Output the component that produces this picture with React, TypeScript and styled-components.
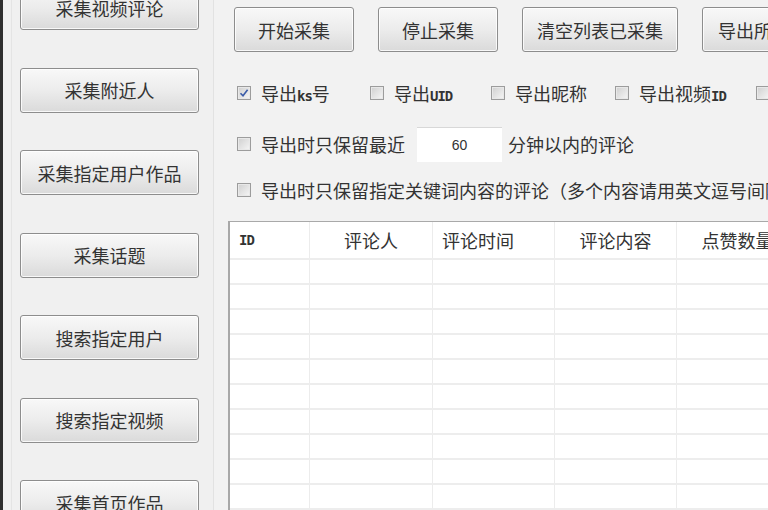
import styled, { createGlobalStyle } from "styled-components";

const GlobalStyle = createGlobalStyle`
    html, body {
        margin: 0;
        padding: 0;
        width: 768px;
        height: 510px;
        overflow: hidden;
        background: #f0f0f0;
    }
    body {
        font-family: "Noto Sans CJK SC", "DejaVu Sans", sans-serif;
        color: #333333;
    }
`;

const Window = styled.div`
    display: flex;
    flex-direction: row;
    width: 768px;
    height: 510px;
    overflow: hidden;
    background: #f0f0f0;
`;

const EdgeStrip = styled.div`
    width: 3px;
    flex: none;
    background: #2e2e2e;
`;

const Sidebar = styled.div`
    flex: none;
    width: 203px;
    box-sizing: border-box;
    display: flex;
    flex-direction: column;
    align-items: flex-start;
    gap: 37.5px;
    margin-top: -15px;
    margin-left: 8px;
    padding-left: 8px;
    border-left: 1px solid #e4e4e4;
    border-right: 1px solid #e2e2e2;
`;

const Button = styled.div<{ $w: number }>`
    flex: none;
    width: ${(p) => p.$w}px;
    height: 45px;
    box-sizing: border-box;
    display: flex;
    align-items: center;
    justify-content: center;
    border: 1px solid #8d8d8d;
    border-radius: 3px;
    background: linear-gradient(to bottom, #f8f8f8 0%, #ececec 50%, #dadada 100%);
    box-shadow: inset 0 0 0 1px rgba(255, 255, 255, 0.8);
    font-size: 18px;
    color: #333333;
    white-space: nowrap;
`;

const Main = styled.div`
    flex: 1;
    display: flex;
    flex-direction: column;
    padding-top: 7px;
    padding-left: 20px;
    min-width: 0;
    background: #f2f2f2;
`;

const Toolbar = styled.div`
    display: flex;
    flex-direction: row;
    gap: 24px;
`;

const OptionRow = styled.div<{ $top: number }>`
    display: flex;
    flex-direction: row;
    align-items: center;
    margin-top: ${(p) => p.$top}px;
    padding-left: 3px;
    height: 34px;
    white-space: nowrap;
`;

const Option = styled.div<{ $w?: number }>`
    flex: none;
    display: flex;
    align-items: center;
    gap: 10px;
    width: ${(p) => (p.$w ? `${p.$w}px` : "auto")};
    font-size: 18px;
`;

const Box = styled.div`
    width: 14px;
    height: 14px;
    flex: none;
    box-sizing: border-box;
    border: 1px solid #9c9c9c;
    background: linear-gradient(135deg, #cfcfcf, #f6f6f6);
    box-shadow: inset 0 0 0 1px #e8e8e8;
    display: flex;
    align-items: center;
    justify-content: center;
`;

const Latin = styled.span`
    font-family: "DejaVu Sans Mono", monospace;
    font-size: 14px;
    font-weight: bold;
    letter-spacing: -1px;
`;

const NumberInput = styled.div`
    flex: none;
    width: 85px;
    height: 34px;
    margin: 0 6px 0 12px;
    background: #ffffff;
    border-top: 1px solid #d8d8d8;
    display: flex;
    align-items: center;
    justify-content: center;
    font-family: "Liberation Sans", sans-serif;
    font-size: 14px;
`;

const Table = styled.div`
    margin-top: 14px;
    margin-left: -6px;
    flex: 1;
    background: #ffffff;
    border-top: 1px solid #a9a9a9;
    border-left: 2px solid #a8a8a8;
    overflow: hidden;
`;

const GridRow = styled.div<{ $h: number }>`
    display: grid;
    grid-template-columns: 80px 123px 122px 122px 122px;
    height: ${(p) => p.$h}px;
    box-sizing: border-box;
    border-bottom: 2px solid #ededed;
`;

const Cell = styled.div<{ $align?: string }>`
    display: flex;
    align-items: center;
    justify-content: ${(p) => p.$align || "flex-start"};
    padding: 0 9px;
    border-right: 1px solid #ececec;
    font-size: 18px;
    white-space: nowrap;
`;

const sideButtons = [
    "采集视频评论",
    "采集附近人",
    "采集指定用户作品",
    "采集话题",
    "搜索指定用户",
    "搜索指定视频",
    "采集首页作品",
];

const columns: { label: string; align: string }[] = [
    { label: "ID", align: "flex-start" },
    { label: "评论人", align: "center" },
    { label: "评论时间", align: "flex-start" },
    { label: "评论内容", align: "center" },
    { label: "点赞数量", align: "center" },
];

const Check = () => (
    <svg width="10" height="10" viewBox="0 0 10 10">
        <path d="M1.5 5.2 L4 7.8 L8.6 1.8" fill="none" stroke="#3b5ca8" strokeWidth="1.6" />
    </svg>
);

const App = () => {
    return (
        <Window>
            <GlobalStyle />
            <EdgeStrip />
            <Sidebar>
                {sideButtons.map((b) => (
                    <Button key={b} $w={179}>{b}</Button>
                ))}
            </Sidebar>
            <Main>
                <Toolbar>
                    <Button $w={120}>开始采集</Button>
                    <Button $w={120}>停止采集</Button>
                    <Button $w={156}>清空列表已采集</Button>
                    <Button $w={140}>导出所有数据</Button>
                </Toolbar>
                <OptionRow $top={24}>
                    <Option $w={133}>
                        <Box><Check /></Box>
                        <span>导出<Latin>ks</Latin>号</span>
                    </Option>
                    <Option $w={121}>
                        <Box />
                        <span>导出<Latin>UID</Latin></span>
                    </Option>
                    <Option $w={124}>
                        <Box />
                        <span>导出昵称</span>
                    </Option>
                    <Option $w={141}>
                        <Box />
                        <span>导出视频<Latin>ID</Latin></span>
                    </Option>
                    <Option>
                        <Box />
                        <span>导出评论</span>
                    </Option>
                </OptionRow>
                <OptionRow $top={17}>
                    <Option>
                        <Box />
                        <span>导出时只保留最近</span>
                    </Option>
                    <NumberInput>60</NumberInput>
                    <Option>分钟以内的评论</Option>
                </OptionRow>
                <OptionRow $top={12}>
                    <Option>
                        <Box />
                        <span>导出时只保留指定关键词内容的评论（多个内容请用英文逗号间隔）</span>
                    </Option>
                </OptionRow>
                <Table>
                    <GridRow $h={38}>
                        {columns.map((c) => (
                            <Cell key={c.label} $align={c.align}>
                                {c.label === "ID" ? <Latin>ID</Latin> : c.label}
                            </Cell>
                        ))}
                    </GridRow>
                    {Array.from({ length: 10 }).map((_, i) => (
                        <GridRow key={i} $h={25}>
                            {columns.map((c) => (
                                <Cell key={c.label} />
                            ))}
                        </GridRow>
                    ))}
                </Table>
            </Main>
        </Window>
    );
};

export default App;
